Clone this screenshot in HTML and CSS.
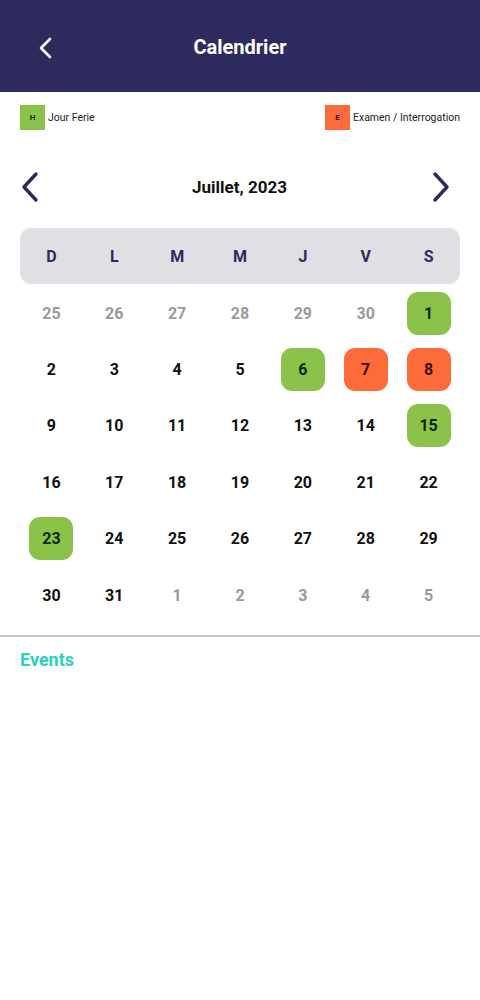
FILE: index.html
```html
<!DOCTYPE html>
<html lang="fr">
<head>
    <meta charset="UTF-8">
    <meta name="viewport" content="width=device-width, initial-scale=1.0">
    <title>Calendrier</title>
    <link rel="stylesheet" href="styles.css">
</head>
<body>
    <header class="topbar">
        <button class="back" aria-label="Retour">
            <svg width="16" height="22" viewBox="0 0 16 22"><path d="M13 2 L4 11 L13 20" fill="none" stroke="#fff" stroke-width="2.6" stroke-linecap="round" stroke-linejoin="round"/></svg>
        </button>
        <h1>Calendrier</h1>
    </header>

    <!-- legend -->
    <div class="legend">
        <div class="legend-item"><span class="tag holiday">H</span>Jour Ferie</div>
        <div class="legend-item"><span class="tag exam">E</span>Examen / Interrogation</div>
    </div>

    <div class="month-nav">
        <button class="nav-btn" aria-label="Mois précédent">
            <svg width="22" height="32" viewBox="0 0 22 32"><path d="M17 3 L5 16 L17 29" fill="none" stroke="#2d2a5e" stroke-width="3.4" stroke-linecap="round" stroke-linejoin="round"/></svg>
        </button>
        <div class="month-title">Juillet, 2023</div>
        <button class="nav-btn" aria-label="Mois suivant">
            <svg width="22" height="32" viewBox="0 0 22 32"><path d="M5 3 L17 16 L5 29" fill="none" stroke="#2d2a5e" stroke-width="3.4" stroke-linecap="round" stroke-linejoin="round"/></svg>
        </button>
    </div>

    <div class="calendar">
        <div class="weekdays">
            <span>D</span><span>L</span><span>M</span><span>M</span><span>J</span><span>V</span><span>S</span>
        </div>
        <div class="days" id="days"></div>
    </div>

    <hr class="divider">
    <h2 class="events-title">Events</h2>

    <script>
        // July 2023 starts on a Saturday, grid starts on Sunday 25 June
        const holidays = [1, 6, 15, 23];
        const exams = [7, 8];
        const days = document.getElementById("days");
        let cells = "";
        for (let d = 25; d <= 30; d++) {
            cells += `<div class="day"><span class="num muted">${d}</span></div>`;
        }
        for (let d = 1; d <= 31; d++) {
            let cls = "num";
            if (holidays.includes(d)) cls += " holiday";
            if (exams.includes(d)) cls += " exam";
            cells += `<div class="day"><span class="${cls}">${d}</span></div>`;
        }
        for (let d = 1; d <= 5; d++) {
            cells += `<div class="day"><span class="num muted">${d}</span></div>`;
        }
        days.innerHTML = cells;
    </script>
</body>
</html>
```

FILE: styles.css
```css
body {
    margin: 0;
    font-family: Roboto, "Noto Sans", sans-serif;
    background-color: #fff;
    color: #111;
}
button {
    background: none;
    border: none;
    padding: 0;
    cursor: pointer;
}
.topbar {
    height: 92px;
    background-color: #2d2a5e;
    display: flex;
    align-items: center;
    justify-content: center;
    position: relative;
}
.topbar h1 {
    margin: 0;
    padding-top: 2px;
    color: #fff;
    font-size: 20px;
    font-weight: 700;
}
.back {
    position: absolute;
    left: 37px;
    top: 37px;
    display: flex;
}
.legend {
    display: flex;
    justify-content: space-between;
    align-items: center;
    padding: 13px 20px 0 20px;
    height: 24px;
}
.legend-item {
    display: flex;
    align-items: center;
    gap: 3px;
    font-size: 10.5px;
    color: #222;
}
.tag {
    width: 25px;
    height: 25px;
    display: flex;
    align-items: center;
    justify-content: center;
    font-size: 8px;
    font-weight: 700;
}
.tag.holiday {
    background-color: #8bc34a;
    color: #10260a;
}
.tag.exam {
    background-color: #fe6b3b;
    color: #3a0f00;
}
.month-nav {
    display: flex;
    align-items: center;
    justify-content: space-between;
    padding: 0 28px 0 19px;
    margin-top: 42px;
    height: 32px;
}
.month-title {
    font-size: 17px;
    font-weight: 700;
    color: #111;
    padding-left: 8px;
}
.nav-btn {
    display: flex;
}
.calendar {
    margin: 25px 20px 0 20px;
}
.weekdays {
    display: grid;
    grid-template-columns: repeat(7, 1fr);
    height: 56px;
    align-items: center;
    background-color: #e0dfe3;
    border-radius: 11px;
    text-align: center;
    font-size: 16px;
    font-weight: 700;
    color: #2d2a5e;
}
.days {
    display: grid;
    grid-template-columns: repeat(7, 1fr);
    grid-auto-rows: 56.4px;
    padding-top: 1px;
}
.day {
    display: flex;
    align-items: center;
    justify-content: center;
}
.num {
    width: 44px;
    height: 43px;
    display: flex;
    align-items: center;
    justify-content: center;
    border-radius: 11px;
    font-size: 16px;
    font-weight: 700;
    color: #111;
}
.num.muted {
    color: #9a9a9a;
}
.num.holiday {
    background-color: #8bc34a;
    color: #10260a;
}
.num.exam {
    background-color: #fe6b3b;
    color: #3a0f00;
}
.divider {
    margin: 12px 0 0 0;
    border: none;
    border-top: 2px solid #c8c8c8;
}
.events-title {
    margin: 12px 20px;
    font-size: 18px;
    font-weight: 700;
    color: #2fcfc0;
}
```
